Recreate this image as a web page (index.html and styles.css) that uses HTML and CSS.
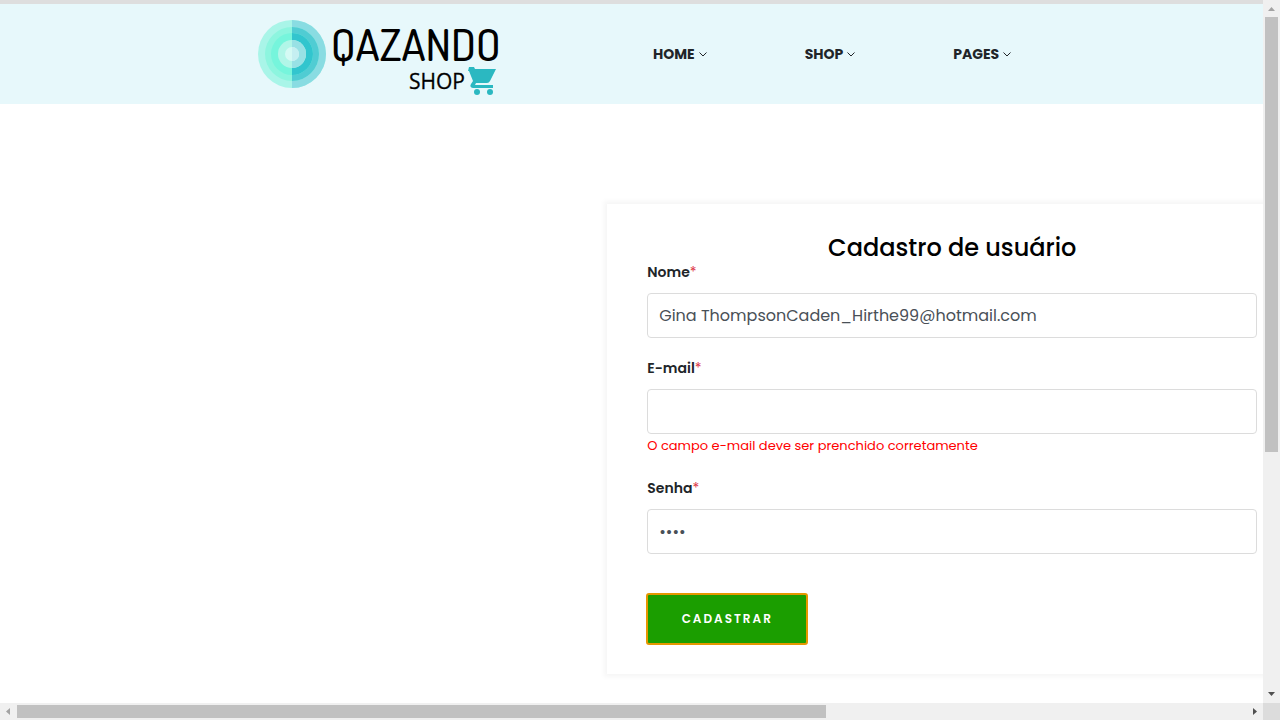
FILE: index.html
```html
<!DOCTYPE html>
<html lang="pt-BR">
<head>
<meta charset="utf-8">
<title>Qazando Shop</title>
<link rel="stylesheet" href="styles.css">
</head>
<body>
<div class="window">
  <div class="view">
    <div class="topbar"></div>
    <header class="header">
      <a class="logo" href="#" aria-label="Qazando Shop">
        <svg width="244" height="80" viewBox="0 -4 244 80">
          <circle cx="34" cy="36" r="34" fill="#a9f5e8"/>
          <path d="M34 2a34 34 0 0 1 0 68z" fill="#89dce2"/>
          <circle cx="34" cy="36" r="27" fill="#8df5df"/>
          <path d="M34 9a27 27 0 0 1 0 54z" fill="#50ccd3"/>
          <circle cx="34" cy="36" r="21" fill="#76f5dc"/>
          <path d="M34 15a21 21 0 0 1 0 42z" fill="#32c5ce"/>
          <circle cx="34" cy="36" r="14" fill="#b1f6e8"/>
          <path d="M34 22a14 14 0 0 1 0 28z" fill="#98e1e5"/>
          <circle cx="34" cy="36" r="7" fill="#d5faf4"/>
          <path d="M34 29a7 7 0 0 1 0 14z" fill="#c5eff1"/>
          <text class="logo-name" x="73" y="43">QAZANDO</text>
          <text class="logo-shop" x="151" y="71">SHOP</text>
          <g fill="#2bb8c1">
            <path d="M211 49h5l1 2h21l-6 12q-1 2-3 2h-11l-1 2h18v3h-20q-4-1-2-4l2-3-4-10h-1z"/>
            <circle cx="219" cy="74" r="3"/><circle cx="232" cy="74" r="3"/>
          </g>
        </svg>
      </a>
      <nav class="nav">
        <a href="#">HOME<svg class="chev" viewBox="0 0 8 5"><path d="M.5.5 4 4 7.500.5"/></svg></a>
        <a href="#">SHOP<svg class="chev" viewBox="0 0 8 5"><path d="M.5.5 4 4 7.500.5"/></svg></a>
        <a href="#">PAGES<svg class="chev" viewBox="0 0 8 5"><path d="M.5.5 4 4 7.500.5"/></svg></a>
      </nav>
    </header>
    <main class="main">
      <form class="card" novalidate>
        <h1 class="title">Cadastro de usuário</h1>
        <div class="field">
          <label for="nome">Nome<span class="req">*</span></label>
          <input id="nome" type="text" value="Gina ThompsonCaden_Hirthe99@hotmail.com">
        </div>
        <div class="field">
          <label for="email">E-mail<span class="req">*</span></label>
          <input id="email" type="email">
          <p class="error">O campo e-mail deve ser prenchido corretamente</p>
        </div>
        <div class="field">
          <label for="senha">Senha<span class="req">*</span></label>
          <input id="senha" type="password" value="1234">
        </div>
        <button class="submit" type="button">CADASTRAR</button>
      </form>
    </main>
  </div>
  <div class="bar bar-v">
    <svg class="arrow off" viewBox="0 0 17 17"><path d="M5 11h7L8.500 7z"/></svg>
    <div class="track"><div class="thumb"></div></div>
    <svg class="arrow" viewBox="0 0 17 17"><path d="M5 6h7l-3.500 4z"/></svg>
  </div>
  <div class="bar bar-h">
    <svg class="arrow off" viewBox="0 0 17 17"><path d="M10 5v7L6 8.500z"/></svg>
    <div class="track"><div class="thumb"></div></div>
    <svg class="arrow" viewBox="0 0 17 17"><path d="M7 5v7l4-3.500z"/></svg>
  </div>
  <div class="corner"></div>
</div>
</body>
</html>
```
FILE: styles.css
```css
* { box-sizing: border-box; }
body { margin: 0; background: #fff; color: #212529; font-family: Poppins, Inter, sans-serif; }
.window { display: grid; grid-template: minmax(0, 1fr) 17px / minmax(0, 1fr) 17px; height: 100vh; }
.view { overflow: hidden; }
.topbar { height: 4px; background: #dedede; }
.header { display: flex; align-items: center; gap: 151px; min-height: 100px; padding-left: 258px; background: #e7f8fb; }
.logo { display: flex; }
.logo svg { overflow: visible; }
.logo-name { font: 500 44px Dosis, "Roboto Condensed", sans-serif; }
.logo-shop { font: 21px "Open Sans", sans-serif; stroke: #000; stroke-width: 0.3; }
.nav { display: flex; gap: 98px; }
.nav a { display: flex; align-items: center; gap: 4px; color: #212529; font-size: 14px; font-weight: 700; line-height: 20px; text-decoration: none; }
.chev { width: 8px; height: 5px; fill: none; stroke: #212529; }
.main { padding: 100px 0 0 calc(48% + 1px); }
.card { width: 690px; padding: 30px 40px; background: #fff; box-shadow: 0 0 5px 3px rgba(0, 0, 0, .04); }
.title { margin: 0; color: #000; font-size: 24px; font-weight: 500; line-height: 28px; text-align: center; }
.field { margin-bottom: 20px; }
.field label { display: block; margin-bottom: 11px; font-size: 14px; font-weight: 600; line-height: 20px; }
.req { color: #dc3545; font-weight: 400; }
.field input { display: block; width: 100%; height: 45px; padding: 0 11px; border: 1px solid #dcdcdc; border-radius: 4px; color: #495057; background: #fff; font: 16px Poppins, Inter, sans-serif; }
.error { margin: 0; color: #f00; font-size: 13px; font-weight: 400; line-height: 24px; }
.submit { display: block; margin-top: 40px; width: 160px; height: 50px; border: 0; border-radius: 2px; outline: 2px solid #e59700; outline-offset: -1px; color: #fff; background: #1b9e00; font: 600 12px Poppins, Inter, sans-serif; letter-spacing: 2px; }
.bar { display: flex; background: #f0f0f0; }
.bar-v { flex-direction: column; }
.arrow { flex: none; width: 17px; height: 17px; fill: #505050; }
.off { fill: #a3a3a3; }
.track { flex: 1; }
.thumb { background: #c1c1c1; }
.bar-v .track { padding: 0 2px; }
.bar-v .thumb { height: 65%; }
.bar-h .track { padding: 2px 0; }
.bar-h .thumb { width: 65.8%; height: 100%; }
.corner { background: #dcdcdc; }
```
